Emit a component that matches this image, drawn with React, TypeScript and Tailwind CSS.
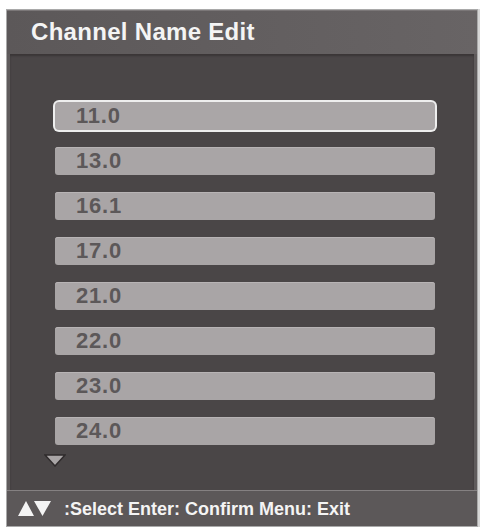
const channels = ['11.0', '13.0', '16.1', '17.0', '21.0', '22.0', '23.0', '24.0'];

export default function App() {
  const selected = 0;

  return (
    <div className="h-[529px] w-[481px] bg-white pl-[6px] pt-[9px] font-['Liberation_Sans',Arial,sans-serif]">
      <div className="flex h-[518px] w-[472px] flex-col border border-[#a9a9a9] bg-[#5f5b5c] shadow-[2px_0_0_#d6d6d6]">
        {/* title */}
        <div className="flex h-[44px] shrink-0 items-center bg-gradient-to-r from-[#5c5859] to-[#686465] pl-[24px] shadow-[inset_0_1px_0_#7b7778]">
          <h1 className="text-[24px] leading-none font-bold tracking-[0.3px] text-[#f4f4f4]">
            Channel Name Edit
          </h1>
        </div>

        {/* list */}
        <div className="mx-[3px] flex flex-1 flex-col bg-[#4a4647] pt-[48px] pl-[45px] pr-[39px] shadow-[inset_0_2px_2px_#3a3637]">
          <div className="flex flex-col gap-[17px]">
            {channels.map((ch, i) => (
              <div
                key={ch}
                className={
                  i === selected
                    ? 'flex h-[28px] items-center rounded-[4px] bg-[#aaa6a7] pl-[21px] shadow-[0_0_0_2px_#eeeeee]'
                    : 'flex h-[28px] items-center rounded-[3px] bg-[#a9a5a6] pl-[21px] shadow-[inset_0_1px_0_#b8b4b5]'
                }
              >
                <span className="text-[22px] leading-none font-bold tracking-[0.8px] text-[#5c5859]">
                  {ch}
                </span>
              </div>
            ))}
          </div>
          <svg className="mt-[9px] ml-[-11px]" width="22" height="13" viewBox="0 0 22 13">
            <polygon points="1,1 21,1 11,12" fill="#a9a5a6" stroke="#2f2b2c" strokeWidth="1.5" />
          </svg>
        </div>

        {/* footer */}
        <div className="flex h-[36px] shrink-0 items-center border-t border-[#858182] bg-[#5c5859] pl-[11px]">
          <svg width="33" height="15" viewBox="0 0 33 15">
            <polygon points="0,15 8,0 16,15" fill="#f4f4f4" />
            <polygon points="16,0 33,0 24.5,15" fill="#f4f4f4" />
          </svg>
          <span className="ml-[13px] text-[18px] leading-none font-bold text-[#f4f4f4]">
            :Select Enter: Confirm Menu: Exit
          </span>
        </div>
      </div>
    </div>
  );
}
